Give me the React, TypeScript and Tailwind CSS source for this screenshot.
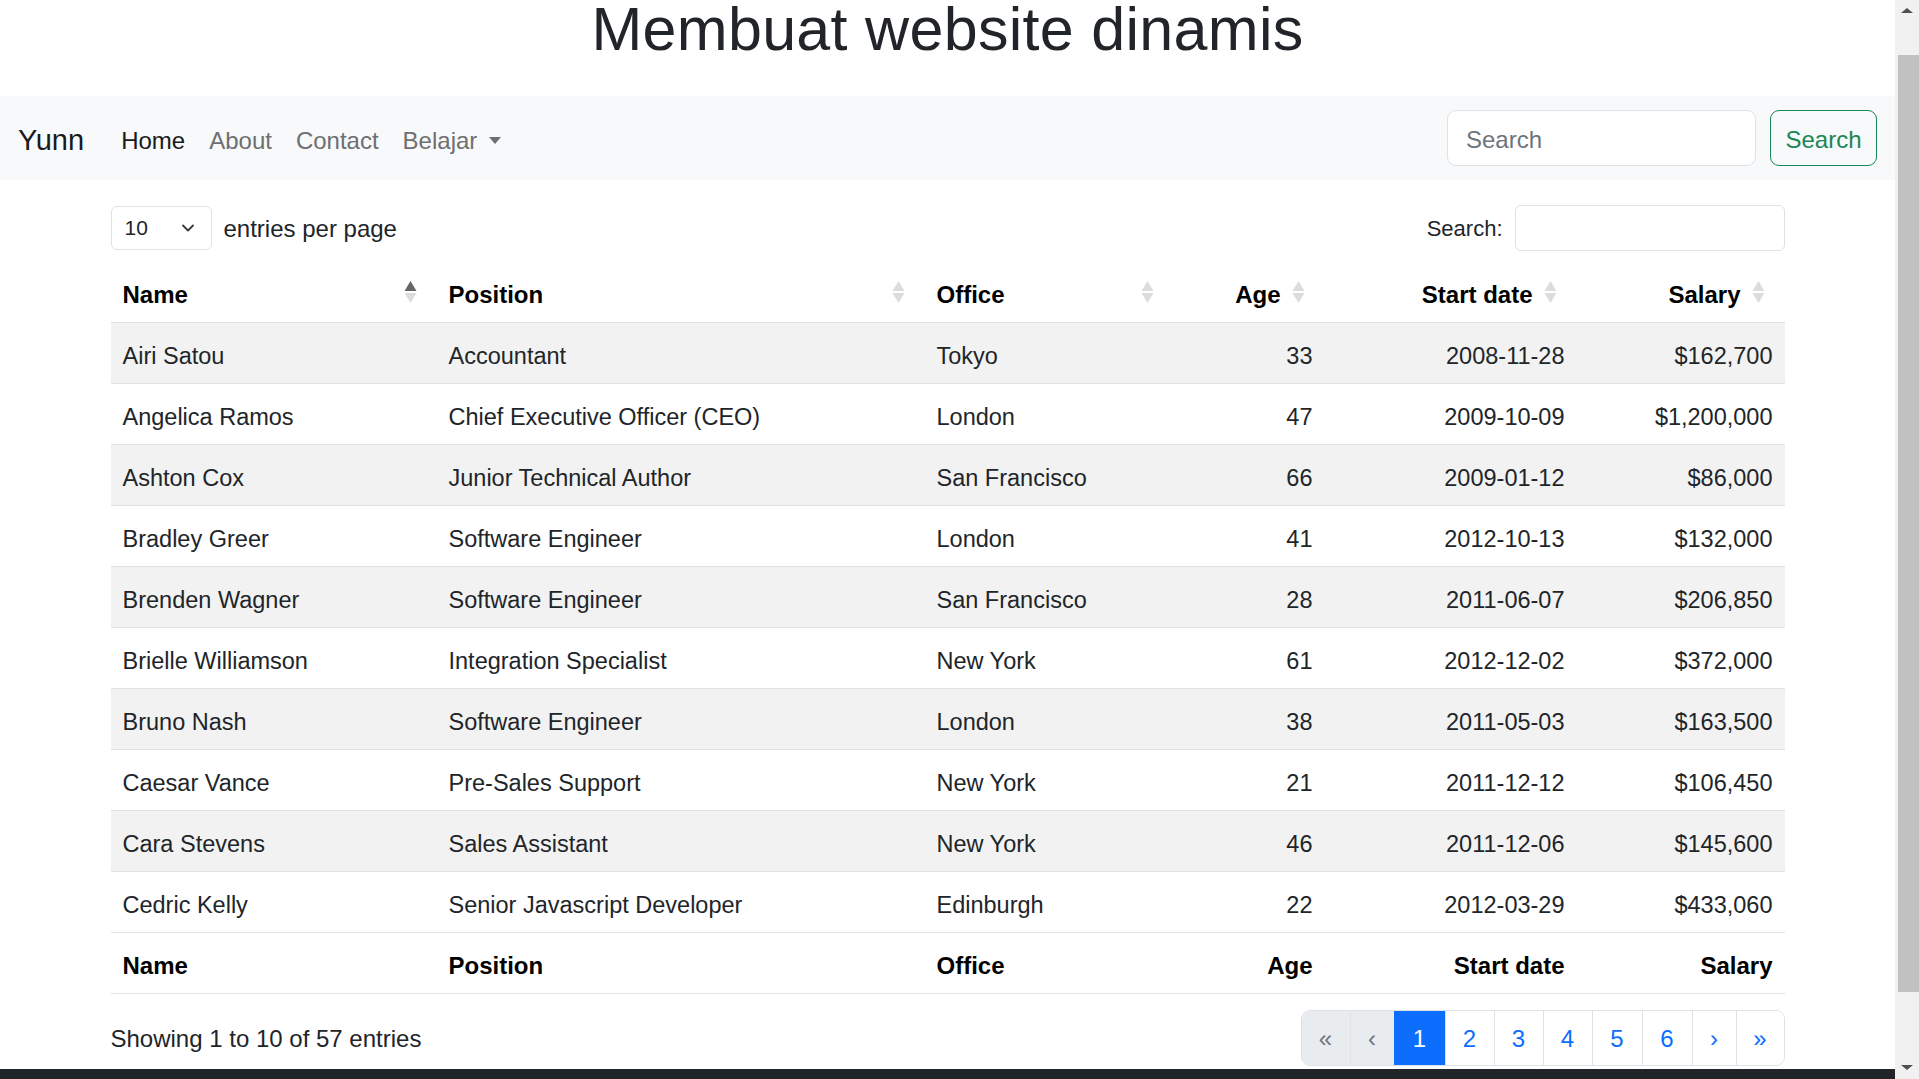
import React from 'react';

type Row = [string, string, string, string, string, string];

const rows: Row[] = [
  ['Airi Satou', 'Accountant', 'Tokyo', '33', '2008-11-28', '$162,700'],
  ['Angelica Ramos', 'Chief Executive Officer (CEO)', 'London', '47', '2009-10-09', '$1,200,000'],
  ['Ashton Cox', 'Junior Technical Author', 'San Francisco', '66', '2009-01-12', '$86,000'],
  ['Bradley Greer', 'Software Engineer', 'London', '41', '2012-10-13', '$132,000'],
  ['Brenden Wagner', 'Software Engineer', 'San Francisco', '28', '2011-06-07', '$206,850'],
  ['Brielle Williamson', 'Integration Specialist', 'New York', '61', '2012-12-02', '$372,000'],
  ['Bruno Nash', 'Software Engineer', 'London', '38', '2011-05-03', '$163,500'],
  ['Caesar Vance', 'Pre-Sales Support', 'New York', '21', '2011-12-12', '$106,450'],
  ['Cara Stevens', 'Sales Assistant', 'New York', '46', '2011-12-06', '$145,600'],
  ['Cedric Kelly', 'Senior Javascript Developer', 'Edinburgh', '22', '2012-03-29', '$433,060'],
];

const columns = [
  { label: 'Name', width: 'w-[326px]', right: false },
  { label: 'Position', width: 'w-[488px]', right: false },
  { label: 'Office', width: 'w-[249px]', right: false },
  { label: 'Age', width: 'w-[151px]', right: true },
  { label: 'Start date', width: 'w-[252px]', right: true },
  { label: 'Salary', width: 'w-[208px]', right: true },
];

// datatables style up/down arrows
const SortIcon = ({ active }: { active?: boolean }) => (
  <svg width="13" height="24" viewBox="0 0 13 24" className="absolute right-[20px] top-1/2 -translate-y-1/2">
    <polygon points="0.5,11 6.5,1 12.5,11" fill={active ? '#666666' : '#dcdcdc'} />
    <polygon points="0.5,13 6.5,23 12.5,13" fill="#dcdcdc" />
  </svg>
);

const pages = [
  { label: '«', w: 'w-[48px]', kind: 'disabled' },
  { label: '‹', w: 'w-[44px]', kind: 'disabled' },
  { label: '1', w: 'w-[51px]', kind: 'active' },
  { label: '2', w: 'w-[49px]', kind: 'link' },
  { label: '3', w: 'w-[49px]', kind: 'link' },
  { label: '4', w: 'w-[49px]', kind: 'link' },
  { label: '5', w: 'w-[50px]', kind: 'link' },
  { label: '6', w: 'w-[50px]', kind: 'link' },
  { label: '›', w: 'w-[44px]', kind: 'link' },
  { label: '»', w: 'w-[48px]', kind: 'link' },
];

const App: React.FC = () => {
  return (
    <div className="w-[1919px] h-[1079px] overflow-hidden flex bg-white font-['Liberation_Sans',Arial,sans-serif] text-[#212529]">
      <div className="w-[1895px] flex flex-col">
        {/* title */}
        <div className="h-[96px] shrink-0">
          <h1 className="text-center text-[61px] leading-[58px] tracking-[0.3px] text-[#212529]">Membuat website dinamis</h1>
        </div>

        {/* navbar */}
        <nav className="h-[84px] shrink-0 bg-[#f8f9fa] flex items-center px-[18px]">
          <span className="text-[29px] text-[#1a1a1a] mr-[25px] pt-[5px]">Yunn</span>
          <ul className="flex items-center text-[24px] pt-[5px]">
            <li className="px-[12px] text-[#1a1a1a]">Home</li>
            <li className="px-[12px] text-[#6e6f70]">About</li>
            <li className="px-[12px] text-[#6e6f70]">Contact</li>
            <li className="px-[12px] text-[#6e6f70] flex items-center">
              Belajar
              <span className="inline-block w-0 h-0 ml-[12px] border-x-[6px] border-x-transparent border-t-[7px] border-t-[#6e6f70]" />
            </li>
          </ul>
          <div className="ml-auto flex items-center gap-[14px]">
            <input
              placeholder="Search"
              className="w-[309px] h-[56px] rounded-[9px] border border-[#dee2e6] bg-white px-[18px] pt-[4px] text-[24px] placeholder:text-[#6c757d] outline-none"
            />
            <button className="w-[107px] h-[56px] rounded-[9px] border border-[#198754] text-[#198754] text-[24px] pt-[4px]">Search</button>
          </div>
        </nav>

        {/* content */}
        <div className="flex-1 w-[1674px] mx-auto pt-[25px]">
          <div className="flex items-center justify-between h-[45px]">
            <div className="flex items-center gap-[12px]">
              <div className="w-[101px] h-[44px] rounded-[6px] border border-[#dee2e6] flex items-center justify-between pl-[13px] pr-[17px] text-[21px]">
                <span>10</span>
                <svg width="12" height="8" viewBox="0 0 12 8">
                  <path d="M1 1.5l5 5 5-5" fill="none" stroke="#343a40" strokeWidth="1.8" strokeLinecap="round" strokeLinejoin="round" />
                </svg>
              </div>
              <span className="text-[24px] pt-[2px]">entries per page</span>
            </div>
            <div className="flex items-center gap-[12px]">
              <span className="text-[22px] pt-[2px]">Search:</span>
              <div className="w-[270px] h-[46px] rounded-[6px] border border-[#dee2e6]" />
            </div>
          </div>

          <table className="mt-[12px] w-[1674px] table-fixed border-collapse">
            <colgroup>
              {columns.map((c) => (
                <col key={c.label} className={c.width} />
              ))}
            </colgroup>
            <thead>
              <tr className="border-b border-[#dee2e6]">
                {columns.map((c, i) => (
                  <th
                    key={c.label}
                    className={`relative pt-[15px] pb-[9px] pl-[12px] text-[24px] leading-[36px] font-bold text-black ${c.right ? 'text-right pr-[44px]' : 'text-left pr-[40px]'}`}
                  >
                    {c.label}
                    <SortIcon active={i === 0} />
                  </th>
                ))}
              </tr>
            </thead>
            <tbody>
              {rows.map((r, ri) => (
                <tr key={r[0]} className={`border-b border-[#dee2e6] ${ri % 2 === 0 ? 'bg-[#f2f2f2]' : 'bg-white'}`}>
                  {r.map((cell, ci) => (
                    <td
                      key={ci}
                      className={`pt-[15px] pb-[9px] px-[12px] text-[23.5px] leading-[36px] whitespace-nowrap ${columns[ci].right ? 'text-right' : 'text-left'}`}
                    >
                      {cell}
                    </td>
                  ))}
                </tr>
              ))}
            </tbody>
            <tfoot>
              <tr className="border-b border-[#dee2e6]">
                {columns.map((c) => (
                  <th
                    key={c.label}
                    className={`pt-[15px] pb-[9px] px-[12px] text-[24px] leading-[36px] font-bold text-black ${c.right ? 'text-right' : 'text-left'}`}
                  >
                    {c.label}
                  </th>
                ))}
              </tr>
            </tfoot>
          </table>

          <div className="mt-[16px] flex items-center justify-between">
            <span className="text-[24px] pt-[2px]">Showing 1 to 10 of 57 entries</span>
            <div className="flex h-[56px] rounded-[9px] border border-[#dee2e6] overflow-hidden text-[24px]">
              {pages.map((p, i) => (
                <div
                  key={p.label}
                  className={`${p.w} h-full flex items-center justify-center pt-[2px] ${i > 0 ? 'border-l' : ''} ${
                    p.kind === 'active'
                      ? 'bg-[#0d6efd] text-white border-[#0d6efd]'
                      : p.kind === 'disabled'
                        ? 'bg-[#e9ecef] text-[#6c757d] border-[#dee2e6]'
                        : 'bg-white text-[#0d6efd] border-[#dee2e6]'
                  }`}
                >
                  {p.label}
                </div>
              ))}
            </div>
          </div>
        </div>

        <div className="h-[10px] shrink-0 bg-[#212529]" />
      </div>

      {/* scrollbar */}
      <div className="w-[24px] h-full bg-[#f1f1f1] flex flex-col items-center">
        <div className="h-[17px] flex items-center justify-center pt-[4px]">
          <span className="w-0 h-0 border-x-[6px] border-x-transparent border-b-[5px] border-b-[#505050]" />
        </div>
        <div className="h-[38px]" />
        <div className="w-[21px] ml-[2px] h-[937px] bg-[#c1c1c1]" />
        <div className="flex-1" />
        <div className="h-[17px] flex items-center justify-center pb-[6px]">
          <span className="w-0 h-0 border-x-[6px] border-x-transparent border-t-[5px] border-t-[#505050]" />
        </div>
      </div>
    </div>
  );
};

export default App;
